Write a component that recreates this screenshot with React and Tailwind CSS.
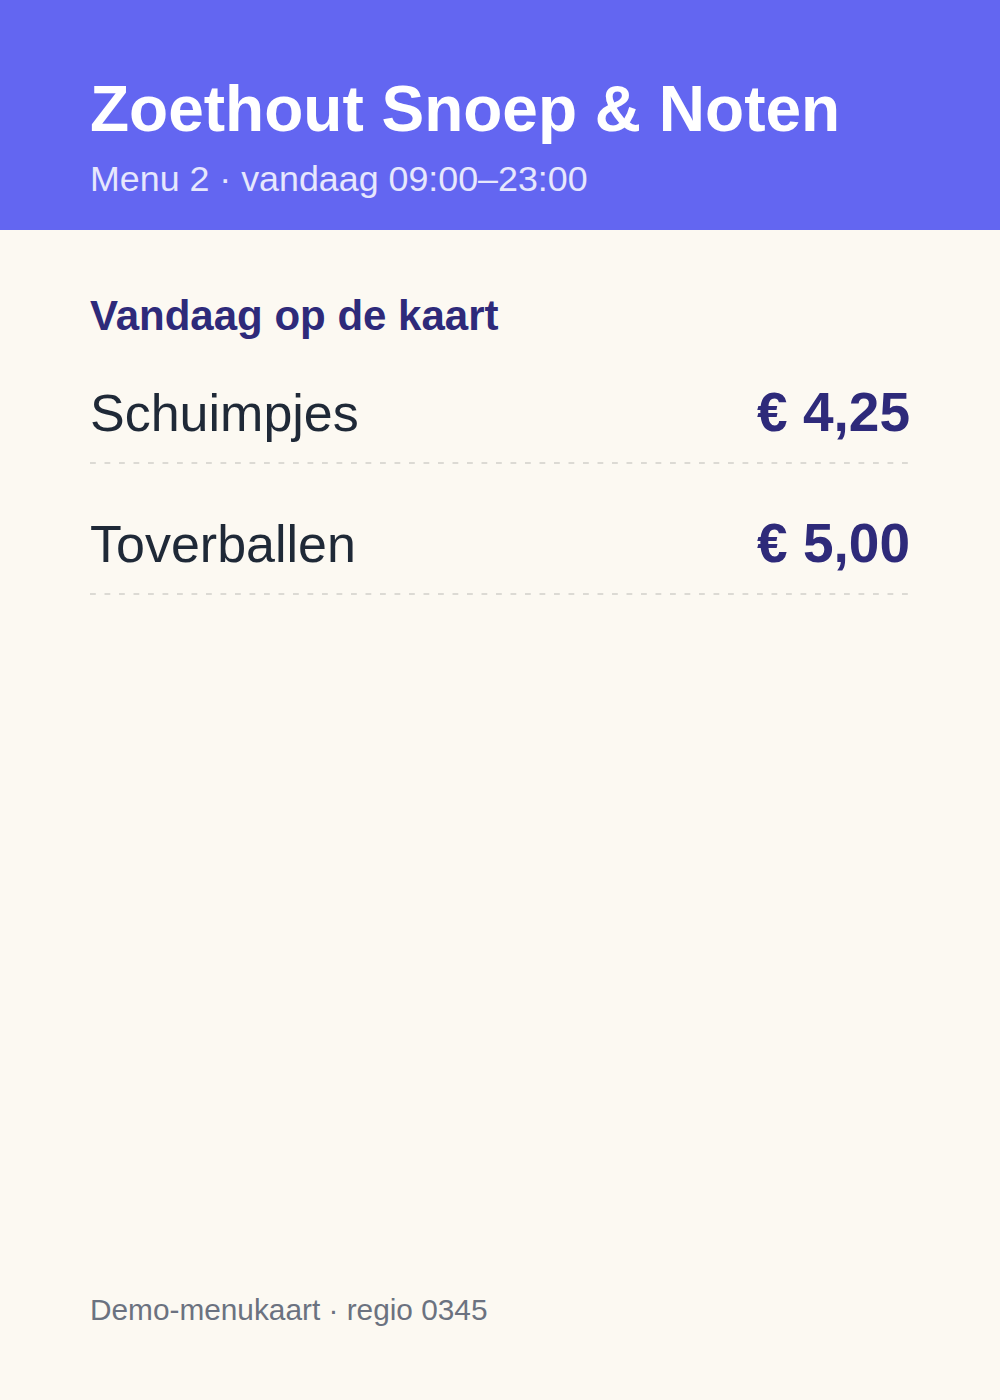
import React from 'react'

const items = [
  { name: 'Schuimpjes', price: '€ 4,25' },
  { name: 'Toverballen', price: '€ 5,00' },
]

const App = () => {
  return (
    <div className="min-h-[1400px] flex flex-col bg-[#fcf9f2] font-['Liberation_Sans',Arial,sans-serif]">
      <header className="bg-[#6366f1] px-[90px] pt-[77px] pb-[29px]">
        <h1 className="text-[64px] leading-[64px] font-bold text-white">Zoethout Snoep &amp; Noten</h1>
        <p className="mt-[16px] text-[35.8px] leading-[44px] text-[#e6e7fd]">Menu 2 · vandaag 09:00–23:00</p>
      </header>

      <main className="px-[90px] pt-[62px]">
        <h2 className="text-[42px] leading-[48px] font-bold text-[#2e2a7a] mb-[2px]">Vandaag op de kaart</h2>
        <ul className="flex flex-col gap-[9px]">
          {items.map((item) => (
            <li key={item.name}>
              <div className="flex items-baseline justify-between pt-[40px] pb-[19px]">
                <span className="text-[52px] leading-[60px] text-[#1f2937]">{item.name}</span>
                <span className="text-[55px] leading-[60px] font-bold text-[#2e2a7a]">{item.price}</span>
              </div>
              <div className="h-[2px] bg-[linear-gradient(to_right,#dcdad4_6px,transparent_6px)] bg-[length:14.5px_2px] bg-repeat-x"></div>
            </li>
          ))}
        </ul>
      </main>

      <footer className="mt-auto px-[90px] pb-[72px]">
        <p className="text-[29.8px] leading-[36px] text-[#6b7280]">Demo-menukaart · regio 0345</p>
      </footer>
    </div>
  )
}

export default App
